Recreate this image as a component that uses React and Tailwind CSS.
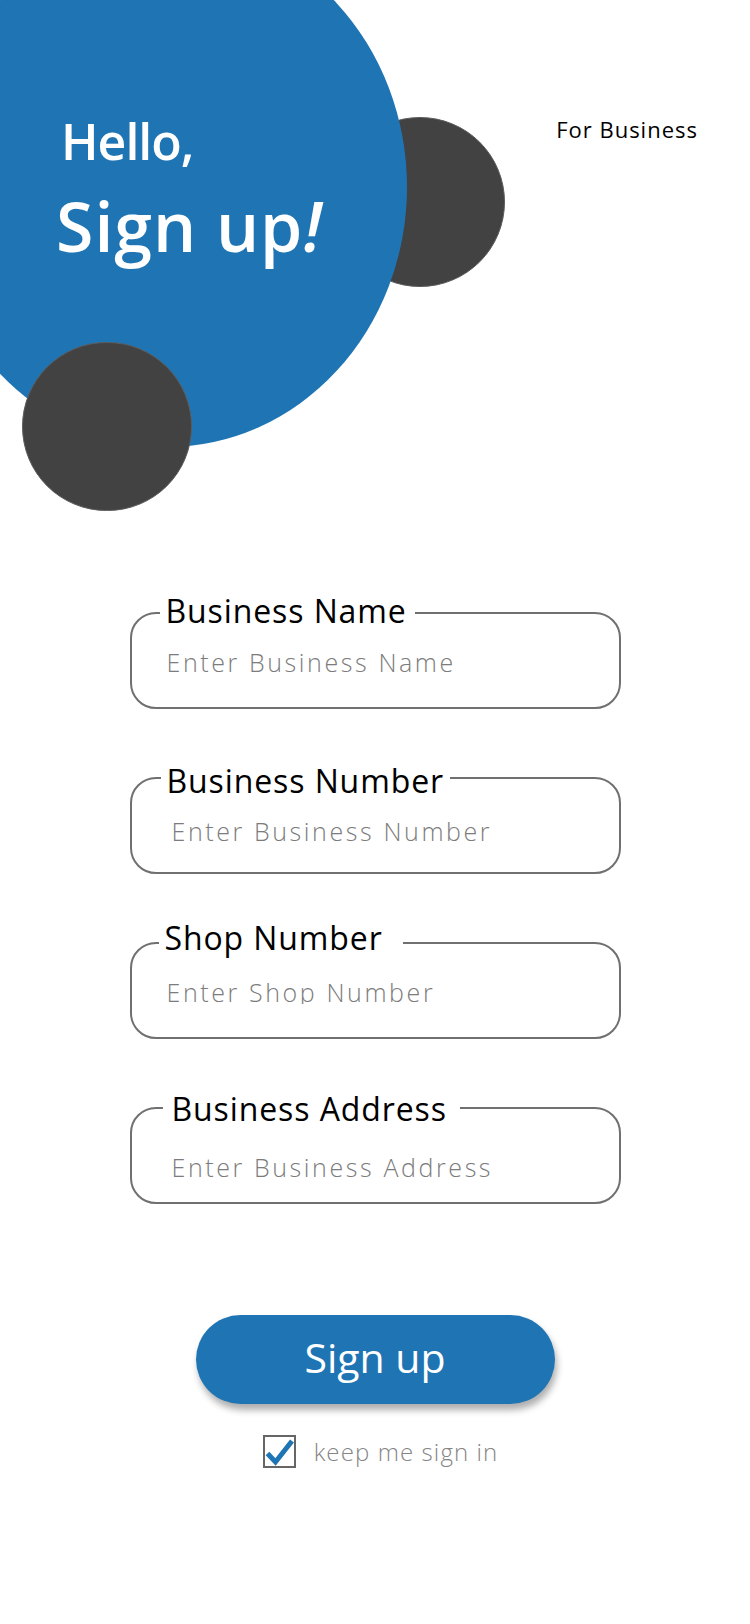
import React from "react";

const fields = [
  { label: "Business Name", placeholder: "Enter Business Name", labelCls: "left-[28px] top-[-19px] pl-[6px] pr-[8px]", inputCls: "pt-[35px] pl-[35px]" },
  { label: "Business Number", placeholder: "Enter Business Number", labelCls: "left-[29px] top-[-14px] pl-[6px] pr-[6px]", inputCls: "pt-[39px] pl-[40px]" },
  { label: "Shop Number", placeholder: "Enter Shop Number", labelCls: "left-[27px] top-[-22px] pl-[6px] pr-[20px]", inputCls: "pt-[35px] pl-[35px]" },
  { label: "Business Address", placeholder: "Enter Business Address", labelCls: "left-[31px] top-[-16px] pl-[9px] pr-[13px]", inputCls: "pt-[45px] pl-[40px]" },
];

function Field({ f }) {
  return (
    <div className={`relative h-[97px] w-[491px] rounded-[26px] border-2 border-[#707070] ${f.inputCls}`}>
      <span className={`absolute bg-white text-[32px] leading-none tracking-[0.9px] text-black ${f.labelCls}`}>
        {f.label}
      </span>
      <input
        type="text"
        placeholder={f.placeholder}
        className="block h-[25px] w-[420px] bg-transparent text-[25px] font-light leading-[25px] tracking-[2.6px] text-[#333] outline-none placeholder:text-[#7c7c7c]"
      />
    </div>
  );
}

export default function App() {
  return (
    <div className="min-h-[1624px] w-[750px] overflow-hidden bg-white font-['Open_Sans',sans-serif]">
      <header className="relative h-[612px]">
        <div className="absolute left-[335px] top-[117px] h-[170px] w-[170px] rounded-full border border-[#5c5c5c] bg-[#424242]" />
        <div className="absolute left-[-73px] top-[-73px] h-[520px] w-[480px] rounded-[50%] bg-[#1f75b4]" />
        <div className="absolute left-[22px] top-[342px] h-[169px] w-[170px] rounded-full border border-[#5c5c5c] bg-[#424242]" />
        <div className="relative flex justify-between">
          <div className="pl-[61px] pt-[116px] font-semibold text-white">
            <div className="text-[50px] leading-none tracking-[-1px]">Hello,</div>
            <div className="ml-[-5px] mt-[26px] text-[68px] leading-none tracking-[1px]">
              Sign up<span className="italic">!</span>
            </div>
          </div>
          <div className="pr-[52px] pt-[118px] text-[22px] font-medium leading-none tracking-[1px] text-black">For Business</div>
        </div>
      </header>

      <main className="flex flex-col items-center">
        <div className="flex flex-col gap-[68px]">
          {fields.map((f) => (
            <Field key={f.label} f={f} />
          ))}
        </div>

        <button className="mt-[111px] flex h-[89px] w-[359px] items-center justify-center rounded-full bg-[#1f75b4] pb-[5px] text-[41px] leading-none text-white shadow-[2px_6px_7px_rgba(0,0,0,0.32)]">
          Sign up
        </button>

        <label className="mt-[31px] flex items-center pl-[11px]">
          <span className="flex h-[33px] w-[33px] items-center justify-center border-2 border-[#666]">
            <svg width="29" height="29" viewBox="0 0 29 29" fill="none">
              <path d="M2.5 16.5 L10.5 25 L27 4" stroke="#1f75b4" strokeWidth="5" strokeLinecap="butt" strokeLinejoin="miter" />
            </svg>
          </span>
          <span className="ml-[18px] text-[24px] font-light leading-none tracking-[1.1px] text-[#858585]">keep me sign in</span>
        </label>
      </main>
    </div>
  );
}
